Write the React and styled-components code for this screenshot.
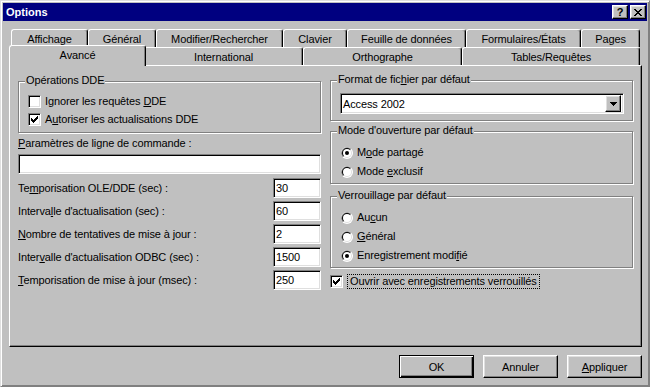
import React from 'react'
import styled, { createGlobalStyle, css } from 'styled-components'

const GlobalStyle = createGlobalStyle`
  html, body {
    margin: 0;
    padding: 0;
    background: #c0c0c0;
  }
  body {
    font-family: 'Liberation Sans', Arial, sans-serif;
    font-size: 11px;
    letter-spacing: -0.12px;
    color: #000;
  }
  * {
    box-sizing: border-box;
  }
`

const raised = css`
  border: 1px solid;
  border-color: #fff #000 #000 #fff;
  box-shadow: inset -1px -1px 0 #808080, inset 1px 1px 0 #dfdfdf;
`
const sunken = css`
  border: 1px solid;
  border-color: #808080 #fff #fff #808080;
  box-shadow: inset 1px 1px 0 #000, inset -1px -1px 0 #dfdfdf;
`

// pixel helpers for the little bitmaps
const pixelPath = (rows) =>
  rows
    .map((row, y) =>
      row
        .split('')
        .map((c, x) => (c === '#' ? `M${x} ${y}h1v1h-1z` : ''))
        .join('')
    )
    .join('')

const CHECK = [
  '......#',
  '.....##',
  '#...###',
  '##.###.',
  '#####..',
  '.###...',
  '..#....',
]
const CLOSE = [
  '##....##',
  '.##..##.',
  '..####..',
  '...##...',
  '..####..',
  '.##..##.',
  '##....##',
]
const ARROW = ['#######', '.#####.', '..###..', '...#...']

const Window = styled.div`
  width: 650px;
  height: 387px;
  background: #c0c0c0;
  border: 1px solid;
  border-color: #dfdfdf #808080 #808080 #dfdfdf;
  box-shadow: inset 1px 1px 0 #fff, inset -1px -1px 0 #808080;
  padding: 2px;
  display: flex;
  flex-direction: column;
`

const TitleBar = styled.div`
  height: 18px;
  background: #000080;
  display: flex;
  align-items: center;
  justify-content: space-between;
  padding: 0 1px 0 3px;
`

const Title = styled.span`
  color: #fff;
  font-weight: bold;
  font-size: 11px;
  letter-spacing: 0;
`

const TitleButtons = styled.div`
  display: flex;
  gap: 2px;
`

const TitleButton = styled.div`
  ${raised};
  width: 16px;
  height: 14px;
  background: #c0c0c0;
  display: flex;
  align-items: center;
  justify-content: center;
  font-weight: bold;
  font-size: 11px;
  line-height: 12px;
`

const Body = styled.div`
  flex: 1;
  display: flex;
  flex-direction: column;
  padding: 8px 5px 0 6px;
`

const TabRow = styled.div`
  display: flex;
  align-items: flex-end;
  height: 18px;
  padding-left: 2px;
`

const Tab = styled.div`
  width: ${(p) => p.$w}px;
  height: 18px;
  flex-shrink: 0;
  display: flex;
  align-items: center;
  justify-content: center;
  background: #c0c0c0;
  border-top: 1px solid #fff;
  border-left: 1px solid #fff;
  border-right: 1px solid #000;
  box-shadow: inset -1px 0 0 #808080;
  border-radius: 3px 3px 0 0;
  white-space: nowrap;
  ${(p) =>
    p.$active &&
    css`
      height: 21px;
      margin: 0 -2px -1px;
      position: relative;
      z-index: 2;
      padding-bottom: 3px;
    `}
`

const Panel = styled.div`
  width: 633px;
  height: 282px;
  border-top: 1px solid #fff;
  border-left: 1px solid #fff;
  border-right: 1px solid #000;
  border-bottom: 1px solid #000;
  box-shadow: inset -1px -1px 0 #808080;
  display: grid;
  grid-template-columns: 303px 303px;
  column-gap: 9px;
  align-items: start;
  padding: 14px 7px 0 8px;
`

const Column = styled.div`
  display: flex;
  flex-direction: column;
`

const Group = styled.div`
  position: relative;
  height: ${(p) => p.$h}px;
  margin-top: ${(p) => p.$mt || 0}px;
  border: 1px solid #808080;
  box-shadow: inset 1px 1px 0 #fff, 1px 1px 0 #fff;
  padding: ${(p) => p.$pad};
  display: flex;
  flex-direction: column;
  gap: ${(p) => p.$gap || 0}px;
`

const Legend = styled.span`
  position: absolute;
  top: -8px;
  left: 6px;
  padding: 0 1px;
  line-height: 13px;
  background: #c0c0c0;
  white-space: nowrap;
`

const OptionRow = styled.div`
  display: flex;
  align-items: center;
  gap: 4px;
  height: 13px;
  line-height: 13px;
  white-space: nowrap;
  margin-top: ${(p) => p.$mt || 0}px;
`

const Box = styled.div`
  ${sunken};
  width: 13px;
  height: 13px;
  flex-shrink: 0;
  background: #fff;
  display: flex;
  align-items: center;
  justify-content: center;
`

const FieldLabel = styled.div`
  line-height: 13px;
  margin-top: 4px;
  white-space: nowrap;
`

const TextBox = styled.div`
  ${sunken};
  width: ${(p) => (p.$w ? `${p.$w}px` : '100%')};
  height: 20px;
  flex-shrink: 0;
  background: #fff;
  padding: 0 2px;
  display: flex;
  align-items: center;
  margin-top: ${(p) => p.$mt || 0}px;
`

const FieldList = styled.div`
  display: flex;
  flex-direction: column;
  gap: 3px;
  margin-top: 4px;
`

const FieldRow = styled.div`
  display: flex;
  align-items: center;
  justify-content: space-between;
  height: 20px;
  white-space: nowrap;
`

const Select = styled.div`
  ${sunken};
  height: 21px;
  background: #fff;
  display: flex;
  align-items: center;
  justify-content: space-between;
  padding: 0 2px 0 2px;
`

const DropButton = styled.div`
  ${raised};
  width: 16px;
  height: 17px;
  background: #c0c0c0;
  display: flex;
  align-items: center;
  justify-content: center;
`

const FocusLabel = styled.span`
  border: 1px dotted #000;
  padding: 0 2px;
  line-height: 13px;
`

const ButtonBar = styled.div`
  display: flex;
  justify-content: flex-end;
  gap: 9px;
  margin-top: 8px;
`

const Button = styled.div`
  width: 75px;
  height: 23px;
  background: #c0c0c0;
  display: flex;
  align-items: center;
  justify-content: center;
  ${(p) =>
    p.$default
      ? css`
          border: 1px solid #000;
          box-shadow: inset 1px 1px 0 #fff, inset -1px -1px 0 #000,
            inset -2px -2px 0 #808080;
        `
      : raised};
`

const Check = ({ checked }) => (
  <Box>
    {checked && (
      <svg width="7" height="7" viewBox="0 0 7 7" shapeRendering="crispEdges">
        <path d={pixelPath(CHECK)} fill="#000" />
      </svg>
    )}
  </Box>
)

const Radio = ({ checked }) => (
  <svg width="12" height="12" viewBox="0 0 12 12" style={{ flexShrink: 0 }}>
    <circle cx="6" cy="6" r="6" fill="#fff" />
    <path d="M1.76 10.24 A6 6 0 0 1 10.24 1.76 L6 6 Z" fill="#808080" />
    <circle cx="6" cy="6" r="5" fill="#dfdfdf" />
    <path d="M2.46 9.54 A5 5 0 0 1 9.54 2.46 L6 6 Z" fill="#000" />
    <circle cx="6" cy="6" r="4" fill="#fff" />
    {checked && <circle cx="6" cy="6" r="2" fill="#000" />}
  </svg>
)

const backTabs = [
  { label: 'Affichage', w: 77 },
  { label: 'Général', w: 68 },
  { label: 'Modifier/Rechercher', w: 127 },
  { label: 'Clavier', w: 64 },
  { label: 'Feuille de données', w: 119 },
  { label: 'Formulaires/États', w: 115 },
  { label: 'Pages', w: 59 },
]

const frontTabs = [
  { label: 'Avancé', w: 133, active: true },
  { label: 'International', w: 159 },
  { label: 'Orthographe', w: 159 },
  { label: 'Tables/Requêtes', w: 178 },
]

const fields = [
  { label: <>Te<u>m</u>porisation OLE/DDE (sec) :</>, value: '30' },
  { label: <>Interva<u>l</u>le d'actualisation (sec) :</>, value: '60' },
  { label: <><u>N</u>ombre de tentatives de mise à jour :</>, value: '2' },
  { label: <>Inter<u>v</u>alle d'actualisation ODBC (sec) :</>, value: '1500' },
  { label: <><u>T</u>emporisation de mise à jour (msec) :</>, value: '250' },
]

export default function App() {
  return (
    <>
      <GlobalStyle />
      <Window>
        <TitleBar>
          <Title>Options</Title>
          <TitleButtons>
            <TitleButton>?</TitleButton>
            <TitleButton>
              <svg width="8" height="7" viewBox="0 0 8 7" shapeRendering="crispEdges">
                <path d={pixelPath(CLOSE)} fill="#000" />
              </svg>
            </TitleButton>
          </TitleButtons>
        </TitleBar>

        <Body>
          <TabRow>
            {backTabs.map((t) => (
              <Tab key={t.label} $w={t.w}>
                {t.label}
              </Tab>
            ))}
          </TabRow>
          <TabRow>
            {frontTabs.map((t) => (
              <Tab key={t.label} $w={t.active ? t.w + 4 : t.w} $active={t.active}>
                {t.label}
              </Tab>
            ))}
          </TabRow>

          <Panel>
            <Column>
              <Group $h={52} $mt={1} $pad="13px 9px 0" $gap={5}>
                <Legend>Opérations DDE</Legend>
                <OptionRow>
                  <Check />
                  <span>Ignorer les requêtes <u>D</u>DE</span>
                </OptionRow>
                <OptionRow>
                  <Check checked />
                  <span>A<u>u</u>toriser les actualisations DDE</span>
                </OptionRow>
              </Group>

              <FieldLabel>
                <u>P</u>aramètres de ligne de commande :
              </FieldLabel>
              <TextBox $mt={4} />

              <FieldList>
                {fields.map((f, idx) => (
                  <FieldRow key={`field_${idx}`}>
                    <span>{f.label}</span>
                    <TextBox $w={48}>{f.value}</TextBox>
                  </FieldRow>
                ))}
              </FieldList>
            </Column>

            <Column>
              <Group $h={41} $pad="12px 8px 0 9px">
                <Legend>
                  Format de fic<u>h</u>ier par défaut
                </Legend>
                <Select>
                  <span>Access 2002</span>
                  <DropButton>
                    <svg width="7" height="4" viewBox="0 0 7 4" shapeRendering="crispEdges">
                      <path d={pixelPath(ARROW)} fill="#000" />
                    </svg>
                  </DropButton>
                </Select>
              </Group>

              <Group $h={53} $mt={10} $pad="14px 10px 0" $gap={6}>
                <Legend>Mode d'ouverture par défaut</Legend>
                <OptionRow>
                  <Radio checked />
                  <span>M<u>o</u>de partagé</span>
                </OptionRow>
                <OptionRow>
                  <Radio />
                  <span>Mode <u>e</u>xclusif</span>
                </OptionRow>
              </Group>

              <Group $h={72} $mt={12} $pad="14px 10px 0" $gap={6}>
                <Legend>Verrouillage par défaut</Legend>
                <OptionRow>
                  <Radio />
                  <span>Au<u>c</u>un</span>
                </OptionRow>
                <OptionRow>
                  <Radio />
                  <span><u>G</u>énéral</span>
                </OptionRow>
                <OptionRow>
                  <Radio checked />
                  <span>Enregistrement modi<u>f</u>ié</span>
                </OptionRow>
              </Group>

              <OptionRow $mt={7}>
                <Check checked />
                <FocusLabel>Ouvrir avec enregistrements verrouillés</FocusLabel>
              </OptionRow>
            </Column>
          </Panel>

          <ButtonBar>
            <Button $default>OK</Button>
            <Button>Annuler</Button>
            <Button>
              <span><u>A</u>ppliquer</span>
            </Button>
          </ButtonBar>
        </Body>
      </Window>
    </>
  )
}
